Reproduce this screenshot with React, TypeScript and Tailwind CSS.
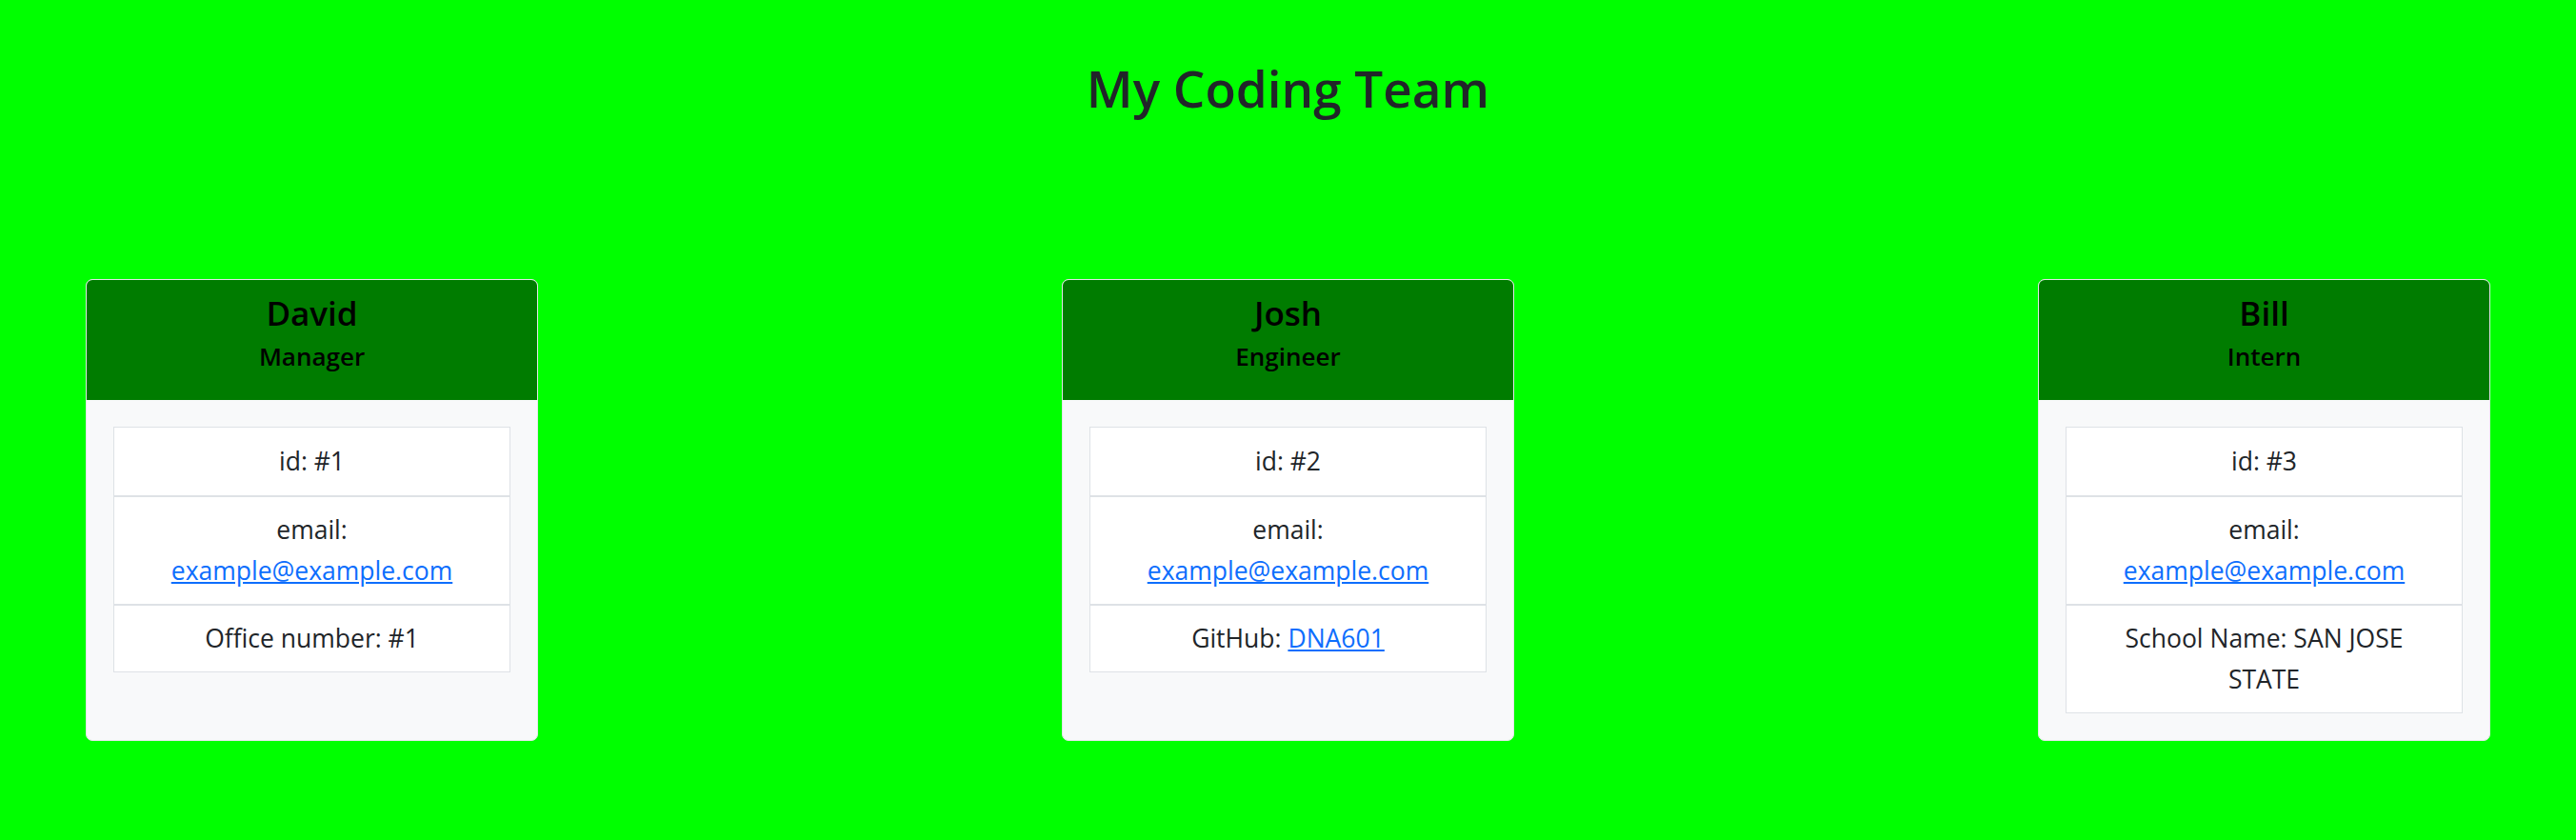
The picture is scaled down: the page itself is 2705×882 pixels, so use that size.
import React from "react";

type Member = {
	name: string;
	role: string;
	id: number;
	email: string;
	extra: React.ReactNode;
};

const team: Member[] = [
	{
		name: "David",
		role: "Manager",
		id: 1,
		email: "example@example.com",
		extra: <>Office number: #1</>,
	},
	{
		name: "Josh",
		role: "Engineer",
		id: 2,
		email: "example@example.com",
		extra: (
			<>
				GitHub:{" "}
				<a href="#" className="text-[#0d6efd] underline">
					DNA601
				</a>
			</>
		),
	},
	{
		name: "Bill",
		role: "Intern",
		id: 3,
		email: "example@example.com",
		extra: <>School Name: SAN JOSE STATE</>,
	},
];

const MemberCard = ({ member }: { member: Member }) => {
	return (
		<div className="w-[475px] flex flex-col border border-[#e4e6e8] rounded-[7px] bg-[#f8f9fa] overflow-hidden">
			<div className="h-[126px] bg-[#007c00] flex flex-col items-center pt-[13px] text-black">
				<h3 className="text-[35px] leading-[44px] font-semibold">{member.name}</h3>
				<h4 className="text-[26px] leading-[36px] font-semibold mt-[5px]">{member.role}</h4>
			</div>
			<div className="p-[28px]">
				<ul className="border border-[#dee2e6] bg-white text-center text-[#212529] text-[26.5px] leading-[43px]">
					<li className="py-[14px] px-[30px]">id: #{member.id}</li>
					<li className="py-[13px] px-[30px] border-t-2 border-[#dee2e6]">
						email:
						<br />
						<a href="#" className="text-[#0d6efd] underline">
							{member.email}
						</a>
					</li>
					<li className="py-[13px] px-[40px] border-t-2 border-[#dee2e6]">{member.extra}</li>
				</ul>
			</div>
		</div>
	);
};

const App = () => {
	return (
		<div
			className="min-h-screen bg-[#00ff00] pt-[58px]"
			style={{ fontFamily: '"Open Sans", "Noto Sans", sans-serif' }}
		>
			<h2 className="text-center text-[53px] leading-[69px] font-semibold text-[#212529]">
				My Coding Team
			</h2>
			<div className="flex justify-between items-stretch px-[90px] mt-[166px]">
				{team.map((member) => (
					<MemberCard key={member.id} member={member} />
				))}
			</div>
		</div>
	);
};

export default App;
